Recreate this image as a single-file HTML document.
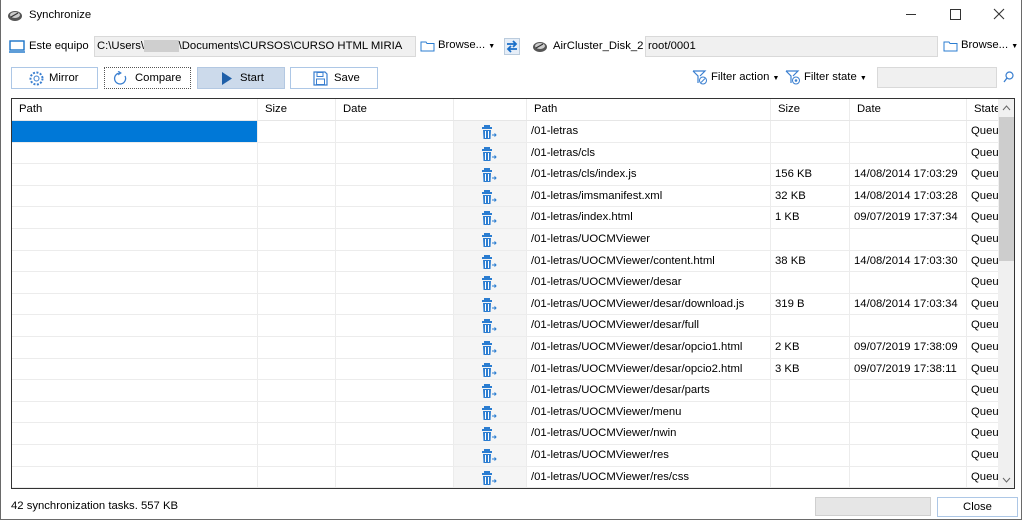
<!DOCTYPE html>
<html><head><meta charset="utf-8"><style>
*{box-sizing:border-box;margin:0;padding:0}
body{width:1024px;height:521px;overflow:hidden;background:#fff;font-family:"Liberation Sans",sans-serif;font-size:11.3px;color:#000;position:relative}
.a{position:absolute;white-space:nowrap}
.win{position:absolute;left:0;top:0;width:1022px;height:520px;border:1px solid #6a6a6a;border-top:none}
.inp{position:absolute;background:#f0f0f0;border:1px solid #d9d9d9;height:21px;line-height:19px;padding-left:2px;overflow:hidden}
.btn{position:absolute;top:67px;height:22px;border:1px solid #adc7e6;background:#fff;line-height:20px}
.tbl{position:absolute;left:11px;top:98px;width:1004px;height:391px;border:1px solid #333;overflow:hidden}
.row{position:absolute;left:0;height:21.6px;width:986px;border-bottom:1px solid #ececec}
.c{position:absolute;top:0;height:100%;border-right:1px solid #ececec;line-height:21px;padding-left:4px;overflow:hidden;white-space:nowrap}
.hd .c{line-height:21px;padding-left:7px}
</style></head><body>
<div class="win"></div>
<svg class="a" style="left:7px;top:9px" width="16" height="13" viewBox="0 0 16 13"><ellipse cx="8" cy="7" rx="7" ry="5" fill="#555"/><ellipse cx="8" cy="6" rx="5" ry="3" fill="#ccc"/><path d="M4 8 L11 4" stroke="#333" stroke-width="1.2"/></svg>
<div class="a" style="left:29px;top:9px">Synchronize</div>
<div class="a" style="left:906px;top:14px;width:10px;height:1px;background:#333"></div>
<div class="a" style="left:950px;top:9px;width:11px;height:11px;border:1px solid #333"></div>
<svg class="a" style="left:993px;top:8px" width="12" height="12"><path d="M1 1 L11 11 M11 1 L1 11" stroke="#333" stroke-width="1.1"/></svg>
<svg class="a" style="left:9px;top:40px" width="16" height="13" viewBox="0 0 16 13"><rect x="1" y="1" width="14" height="9" fill="none" stroke="#1a73c8" stroke-width="1.4"/><path d="M0 12 H16" stroke="#1a73c8" stroke-width="1.4"/></svg>
<div class="a" style="left:29px;top:40px">Este equipo</div>
<div class="inp" style="left:94px;top:36px;width:322px">C:\Users\<span style="color:#aaa;background:#cfcfcf">&nbsp;&nbsp;&nbsp;&nbsp;&nbsp;&nbsp;&nbsp;&nbsp;&nbsp;&nbsp;&nbsp;</span>\Documents\CURSOS\CURSO HTML MIRIA</div>
<svg class="a" style="left:420px;top:40px" width="15" height="12"><path d="M1 2 H6 L7 3.5 H14 V11 H1 Z" fill="none" stroke="#2b7dd1"/></svg>
<div class="a" style="left:438px;top:39px">Browse... <span style="font-size:7px">▼</span></div>
<svg class="a" style="left:504px;top:38px" width="16" height="17"><rect x="0.5" y="0.5" width="15" height="16" fill="#e6eef8" stroke="#bcd"/><path d="M3 6 H12 M9 3 L12 6 L9 9 M13 11 H4 M7 8 L4 11 L7 14" fill="none" stroke="#1a6fc8" stroke-width="1.8"/></svg>
<svg class="a" style="left:532px;top:40px" width="16" height="13" viewBox="0 0 16 13"><ellipse cx="8" cy="7" rx="7" ry="5" fill="#555"/><ellipse cx="8" cy="6" rx="5" ry="3" fill="#ccc"/><path d="M4 8 L11 4" stroke="#333" stroke-width="1.2"/></svg>
<div class="a" style="left:553px;top:40px">AirCluster_Disk_2</div>
<div class="inp" style="left:645px;top:36px;width:293px">root/0001</div>
<svg class="a" style="left:943px;top:40px" width="15" height="12"><path d="M1 2 H6 L7 3.5 H14 V11 H1 Z" fill="none" stroke="#2b7dd1"/></svg>
<div class="a" style="left:961px;top:39px">Browse... <span style="font-size:7px">▼</span></div>
<div class="btn" style="left:11px;width:87px"><svg class="a" style="left:17px;top:3px" width="15" height="15"><circle cx="7.5" cy="7.5" r="6" fill="none" stroke="#3a7fd0" stroke-width="2" stroke-dasharray="2 1.5"/><circle cx="7.5" cy="7.5" r="2.5" fill="none" stroke="#3a7fd0"/></svg><span class="a" style="left:37px;top:0">Mirror</span></div>
<div class="btn" style="left:104px;width:87px;border:1px dotted #555"><svg class="a" style="left:8px;top:3px" width="15" height="15"><path d="M12 5 A5.5 5.5 0 1 1 7.5 2" fill="none" stroke="#3a7fd0" stroke-width="1.3"/><path d="M5 0 L8 2 L5 4" fill="none" stroke="#3a7fd0"/></svg><span class="a" style="left:30px;top:0">Compare</span></div>
<div class="btn" style="left:197px;width:88px;background:#ccdaeb;border-color:#b3c8e2"><svg class="a" style="left:23px;top:4px" width="12" height="13"><path d="M1 0 L11 6.5 L1 13Z" fill="#1f5fa8"/></svg><span class="a" style="left:42px;top:0">Start</span></div>
<div class="btn" style="left:290px;width:88px"><svg class="a" style="left:22px;top:3px" width="15" height="15"><path d="M1 1 H12 L14 3 V14 H1Z" fill="none" stroke="#3a7fd0" stroke-width="1.2"/><rect x="4" y="1.5" width="6" height="4" fill="none" stroke="#3a7fd0"/><rect x="3.5" y="8" width="8" height="5.5" fill="none" stroke="#3a7fd0"/></svg><span class="a" style="left:43px;top:0">Save</span></div>
<svg class="a" style="left:692px;top:70px" width="16" height="15"><path d="M1 1 H13 L8 6 M1 1 L6 6 V13" fill="none" stroke="#3a7fd0" stroke-width="1.2"/><circle cx="11" cy="10.5" r="3.5" fill="#fff" stroke="#3a7fd0"/><path d="M9 12.5 L13 8.5" stroke="#3a7fd0"/></svg>
<div class="a" style="left:711px;top:71px">Filter action <span style="font-size:7px">▼</span></div>
<svg class="a" style="left:785px;top:70px" width="16" height="15"><path d="M1 1 H13 L8 6 M1 1 L6 6 V13" fill="none" stroke="#3a7fd0" stroke-width="1.2"/><circle cx="11" cy="10.5" r="3.5" fill="#fff" stroke="#3a7fd0"/><circle cx="11" cy="10.5" r="1.3" fill="#3a7fd0"/></svg>
<div class="a" style="left:804px;top:71px">Filter state <span style="font-size:7px">▼</span></div>
<div class="inp" style="left:877px;top:67px;width:120px"></div>
<svg class="a" style="left:1003px;top:71px" width="11" height="12"><circle cx="6.5" cy="4.5" r="3.5" fill="none" stroke="#3a7fd0" stroke-width="1.2"/><path d="M4 7 L1 11" stroke="#3a7fd0" stroke-width="1.3"/></svg>
<div class="tbl">
<div class="row hd" style="top:0;height:22px;border-bottom:1px solid #e6e6e6">
<div class="c" style="left:0;width:246px">Path</div><div class="c" style="left:246px;width:78px">Size</div><div class="c" style="left:324px;width:118px">Date</div><div class="c" style="left:442px;width:73px"></div><div class="c" style="left:515px;width:244px">Path</div><div class="c" style="left:759px;width:79px">Size</div><div class="c" style="left:838px;width:117px">Date</div><div class="c" style="left:955px;width:31px;border:none">State</div>
</div>
<div id="rows"></div>
<div class="a" style="left:986px;top:0;width:17px;height:391px;background:#f0f0f0"></div>
<div class="a" style="left:987px;top:18px;width:15px;height:144px;background:#cdcdcd"></div>
<svg class="a" style="left:990px;top:6px" width="9" height="6"><path d="M1 5 L4.5 1 L8 5" fill="none" stroke="#666"/></svg>
<svg class="a" style="left:990px;top:378px" width="9" height="6"><path d="M1 1 L4.5 5 L8 1" fill="none" stroke="#666"/></svg>
</div>
<div class="a" style="left:11px;top:500px">42 synchronization tasks. 557 KB</div>
<div class="a" style="left:815px;top:497px;width:116px;height:19px;background:#e6e6e6;border:1px solid #cfcfcf"></div>
<div class="a" style="left:937px;top:497px;width:81px;height:20px;border:1px solid #adc7e6;text-align:center;line-height:18px">Close</div>
<script>
var d=[["/01-letras","",""],["/01-letras/cls","",""],["/01-letras/cls/index.js","156 KB","14/08/2014 17:03:29"],["/01-letras/imsmanifest.xml","32 KB","14/08/2014 17:03:28"],["/01-letras/index.html","1 KB","09/07/2019 17:37:34"],["/01-letras/UOCMViewer","",""],["/01-letras/UOCMViewer/content.html","38 KB","14/08/2014 17:03:30"],["/01-letras/UOCMViewer/desar","",""],["/01-letras/UOCMViewer/desar/download.js","319 B","14/08/2014 17:03:34"],["/01-letras/UOCMViewer/desar/full","",""],["/01-letras/UOCMViewer/desar/opcio1.html","2 KB","09/07/2019 17:38:09"],["/01-letras/UOCMViewer/desar/opcio2.html","3 KB","09/07/2019 17:38:11"],["/01-letras/UOCMViewer/desar/parts","",""],["/01-letras/UOCMViewer/menu","",""],["/01-letras/UOCMViewer/nwin","",""],["/01-letras/UOCMViewer/res","",""],["/01-letras/UOCMViewer/res/css","",""]];
var ic='<svg width="18" height="16" style="margin-top:3px"><rect x="3" y="1" width="6" height="2" fill="#2b7dd1"/><rect x="1" y="3" width="10" height="2" fill="#2b7dd1"/><path d="M2 6 H10 L9.5 15 H2.5Z" fill="#2b7dd1"/><path d="M4.5 7 V14 M7.5 7 V14" stroke="#fff"/><path d="M11 11 H15 M13.5 9.5 L15 11 L13.5 12.5" fill="none" stroke="#2b7dd1"/></svg>';
var h='';d.forEach(function(r,i){var t=22+i*21.6;h+='<div class="row" style="top:'+t+'px"><div class="c" style="left:0;width:246px;'+(i==0?'background:#0078d7;':'')+'"></div><div class="c" style="left:246px;width:78px"></div><div class="c" style="left:324px;width:118px"></div><div class="c" style="left:442px;width:73px;background:#f5f5f5;text-align:center;padding:0">'+ic+'</div><div class="c" style="left:515px;width:244px">'+r[0]+'</div><div class="c" style="left:759px;width:79px">'+r[1]+'</div><div class="c" style="left:838px;width:117px">'+r[2]+'</div><div class="c" style="left:955px;width:31px;border:none">Queued</div></div>'});
document.getElementById('rows').innerHTML=h;
</script>
</body></html>
